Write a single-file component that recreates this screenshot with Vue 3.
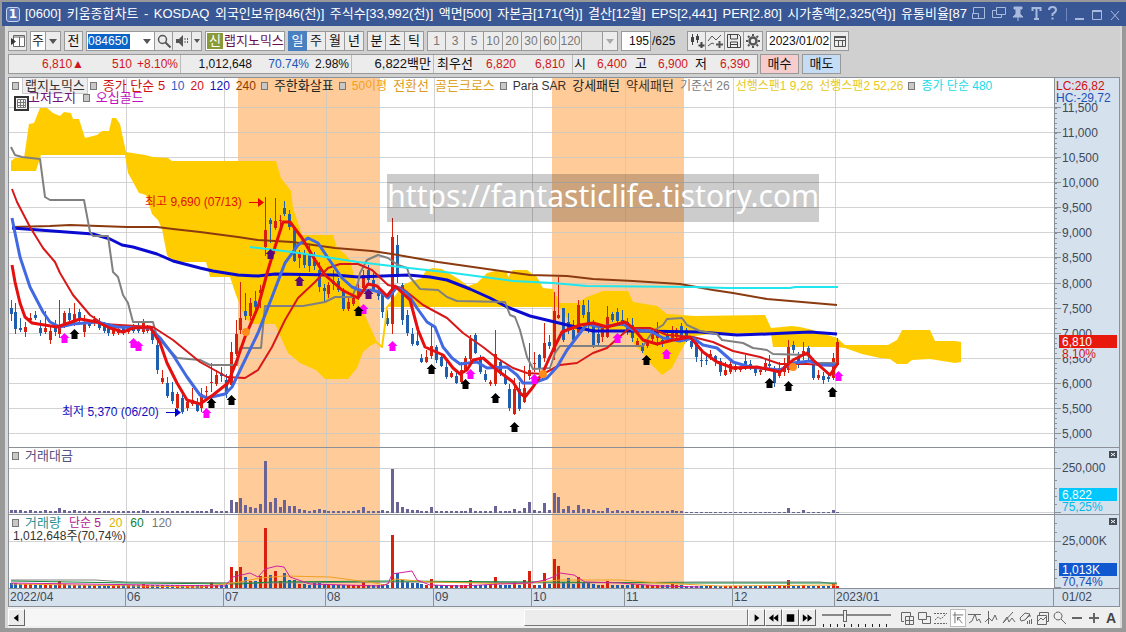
<script setup>
import { ref } from 'vue'

const title = ['[0600]', '키움종합차트', '-', 'KOSDAQ', '외국인보유[846(천)]', '주식수[33,992(천)]', '액면[500]', '자본금[171(억)]', '결산[12월]', 'EPS[2,441]', 'PER[2.80]', '시가총액[2,325(억)]', '유통비율[87']
const code = ref('084650')
const count = ref('195')
const date = ref('2023/01/02')
const zoom = ref(33)
const units = ['일', '주', '월', '년']
const intraday = ['분', '초', '틱']
const minutes = [1, 3, 5, 10, 20, 30, 60, 120]

const quote = [
  ['6,810▲', 'up'], ['510', 'up'], ['+8.10%', 'up sep'], ['1,012,648', ''], ['70.74%', 'down'], ['2.98%', 'sep'],
  ['6,822백만', 'sep ko'], ['최우선', 'ko'], ['6,820', 'up'], ['6,810', 'up sep wide'],
  ['시', 'ko'], ['6,400', 'up'], ['고', 'ko'], ['6,900', 'up'], ['저', 'ko'], ['6,390', 'up wide'],
]

const legend = [
  { t: '랩지노믹스', c: '#333', m: 1, box: 1 },
  { t: '종가 단순 5', c: '#d01010', m: 1 }, { t: '10', c: '#2a62c8', s: 1 }, { t: '20', c: '#d01010', s: 1 }, { t: '120', c: '#1010c0', s: 1 }, { t: '240', c: '#8b3a00', s: 1 },
  { t: '주한화살표', c: '#222', m: 1 },
  { t: '50이평', c: '#f0a020', m: 1, s: 1 }, { t: '전환선', c: '#e09a20' }, { t: '골든크로스', c: '#e0a020' },
  { t: 'Para SAR', c: '#333', m: 1, s: 1 }, { t: '강세패턴', c: '#222' }, { t: '약세패턴', c: '#4a3020' }, { t: '기준선 26', c: '#808080', s: 1 },
  { t: '선행스팬1 9,26', c: '#e8c820', s: 1 }, { t: '선행스팬2 52,26', c: '#e8c820', s: 1 },
  { t: '종가 단순 480', c: '#20dce8', m: 1, s: 1 },
]
const volumeLegend = [
  { t: '거래량', c: '#2a9090', m: 1 }, { t: '단순 5', c: '#b01890', s: 1 }, { t: '20', c: '#e0b000', s: 1 }, { t: '60', c: '#108030', s: 1 }, { t: '120', c: '#777', s: 1 },
]

const priceTicks = Array.from({ length: 14 }, (_, i) => ({ y: Math.round(107 + i * 25.08) + 0.5, label: (11500 - i * 500).toLocaleString('en-US') }))
const minorTicks = Array.from({ length: 68 }, (_, i) => 103.5 + i * 5)
const months = [126.5, 224.5, 326.5, 434.5, 532.5, 625.5, 733.5, 835.5]
const monthLabels = ['2022/04', '06', '07', '08', '09', '10', '11', '12', '2023/01']
const bands = [[238, 142], [552, 132]]

// x, high, body top, body bottom, low, direction (1 = up)
const candles = `11 300 308 314 321 0,15 303 312 329 334 0,20 318 328 330 332 0,25 322 327 332 337 1,30 313 318 320 323 1,35 311 315 318 320 0,40 320 328 333 336 0,45 311 328 332 334 1,50 325 331 340 344 1,55 320 326 332 336 0,59 300 326 334 338 1,64 311 313 324 328 1,69 308 313 320 322 0,74 303 314 322 326 1,79 309 312 320 322 0,84 315 322 332 337 1,89 320 322 326 328 0,94 316 319 323 326 1,99 318 322 328 330 0,104 322 325 331 333 0,108 323 326 333 336 0,113 325 328 334 336 1,118 326 329 333 335 1,123 325 327 333 335 0,128 325 327 332 334 1,133 324 326 331 333 0,138 322 326 331 333 0,143 319 323 332 334 1,147 325 328 331 333 1,152 326 331 340 344 0,157 340 345 370 374 0,162 370 378 382 384 1,167 377 383 396 398 0,172 382 392 401 404 0,177 392 394 408 410 1,182 393 398 412 414 0,187 400 402 408 411 1,192 388 400 404 406 1,197 398 402 411 412 0,201 388 394 408 412 1,206 386 391 392 398 1,211 363 382 383 392 1,216 370 375 384 386 1,221 367 373 376 382 0,226 374 380 394 398 0,231 342 352 385 388 1,236 320 334 354 356 1,240 282 318 330 334 1,245 293 311 316 320 0,250 298 303 316 320 1,255 291 301 307 311 0,260 285 290 293 308 1,265 197 230 247 256 1,270 218 220 224 243 0,275 198 221 228 230 1,280 215 220 221 232 1,284 201 208 214 216 0,289 210 214 227 230 0,294 226 228 261 262 0,299 250 253 258 268 1,304 250 253 265 268 0,309 245 255 266 272 0,314 252 258 266 270 0,319 262 270 287 292 0,324 284 288 291 302 0,328 282 285 294 298 1,333 270 281 284 290 0,338 278 281 290 292 0,343 288 291 309 311 0,348 298 302 309 311 1,353 294 298 304 306 1,358 282 290 298 300 1,363 270 275 288 290 1,368 265 270 280 286 0,373 273 280 290 292 0,378 288 292 296 300 0,382 290 293 312 318 0,387 310 318 324 326 0,392 218 237 324 334 1,397 235 245 277 283 0,402 283 285 320 325 0,407 310 315 333 336 0,412 328 334 344 346 0,417 332 341 345 346 0,421 354 358 362 363 0,426 350 357 362 363 1,431 325 346 356 359 1,436 345 347 360 363 0,441 355 357 366 367 0,446 362 367 377 379 0,451 371 373 377 378 1,456 370 376 383 384 0,461 362 370 382 383 1,465 356 358 370 372 1,470 335 339 359 361 1,475 333 335 353 354 0,480 355 358 372 374 0,485 370 374 380 382 0,490 380 382 384 386 1,495 330 354 384 386 1,500 360 362 374 376 0,505 370 377 384 385 0,509 384 389 408 411 0,514 378 389 414 415 1,519 382 389 409 411 0,524 366 388 402 403 1,529 343 370 376 380 1,534 352 363 364 372 1,539 354 355 368 372 0,544 323 343 358 362 1,549 335 342 346 349 0,554 292 311 352 360 1,558 277 315 318 319 1,563 308 308 340 342 0,568 313 322 330 334 0,573 320 330 340 342 0,578 300 305 333 336 1,583 300 305 315 318 0,588 300 312 325 333 0,593 320 322 347 348 0,598 328 334 343 346 0,602 325 328 337 342 1,607 306 317 337 338 1,612 312 314 320 322 0,617 308 312 321 326 0,622 310 320 324 326 0,627 318 322 331 335 0,632 318 325 338 342 0,637 338 341 345 346 1,642 343 346 351 353 0,647 338 342 346 348 1,652 330 334 339 342 1,657 322 331 338 346 1,662 338 340 344 347 0,667 330 335 340 342 0,672 326 330 338 340 1,676 328 330 337 342 1,681 323 326 338 341 0,686 328 330 340 342 0,691 338 341 347 349 0,696 342 343 357 362 0,701 352 360 361 367 0,706 356 360 361 365 0,710 350 354 356 360 1,715 355 356 362 366 0,720 358 361 372 376 0,725 362 370 375 376 1,730 360 364 372 374 1,735 362 366 370 372 1,740 366 368 370 372 1,745 355 361 366 370 0,750 360 364 368 370 0,755 366 369 373 376 0,760 369 370 372 375 1,765 358 363 370 372 1,769 355 364 366 370 0,774 366 370 383 387 0,779 362 368 376 378 1,784 358 366 372 376 1,788 340 347 370 373 1,793 341 345 350 353 0,798 352 358 363 368 0,803 342 351 356 360 1,808 346 348 356 360 0,813 358 361 378 380 0,818 370 375 378 380 1,823 372 376 380 384 0,828 374 377 379 382 0,833 353 358 378 380 1,837 338 342 365 366 1`
  .split(',').map(r => { const [x, hi, top, bot, lo, up] = r.split(' ').map(Number); return { x, hi, top, bot, lo, up } })

const turnover = { 11: 3, 15: 3, 20: 3, 30: 3, 45: 3, 59: 5, 64: 3, 74: 3, 143: 3, 211: 4, 231: 13, 236: 11, 240: 15, 245: 8, 250: 6, 255: 5, 260: 9, 265: 52, 270: 11, 275: 15, 280: 6, 284: 13, 289: 7, 294: 7, 299: 4, 304: 3, 314: 3, 319: 4, 324: 3, 358: 3, 363: 6, 382: 3, 392: 44, 397: 11, 402: 6, 407: 4, 412: 3, 417: 3, 431: 6, 470: 5, 495: 7, 514: 4, 524: 5, 529: 11, 534: 3, 544: 10, 549: 3, 554: 20, 558: 16, 563: 4, 568: 7, 573: 3, 578: 8, 583: 4, 588: 4, 593: 3, 607: 5, 617: 3, 632: 3, 672: 3, 788: 5, 803: 3, 833: 3 }
const volume = { 11: 5, 15: 5, 20: 4, 25: 4, 30: 4, 59: 7, 64: 4, 143: 4, 211: 6, 231: 21, 236: 17, 240: 21, 245: 11, 250: 7, 255: 7, 260: 12, 265: 60, 270: 13, 275: 17, 280: 7, 284: 15, 289: 8, 294: 8, 299: 4, 304: 4, 314: 5, 319: 5, 324: 4, 363: 7, 382: 4, 392: 53, 397: 15, 402: 8, 407: 6, 412: 5, 417: 5, 421: 4, 431: 9, 470: 8, 495: 11, 514: 6, 524: 8, 529: 17, 544: 15, 534: 3, 549: 4, 554: 29, 558: 22, 563: 6, 568: 10, 573: 4, 578: 11, 583: 5, 588: 5, 593: 4, 607: 7, 632: 4, 672: 4, 788: 8, 803: 3, 833: 4 }
const barsOf = (map, base, low, late) => candles.map(c => {
  const h = map[c.x] ?? (c.x > 685 ? late : low)
  return { x: c.x - 1, y: base - h, h, up: c.up }
})
const turnoverBars = barsOf(turnover, 513, 2, 1)
const volumeBars = barsOf(volume, 588, 3, 2)

const clouds = [
  '11,161 15,158 24,158 29,124 34,123 40,108 47,108 53,113 60,116 64,112 71,113 73,119 79,119 85,138 97,135 102,131 109,131 112,118 116,118 120,124 126,152 145,155 153,157 168,158 172,161 276,161 281,178 291,191 293,208 302,235 333,235 337,248 345,254 350,260 353,272 357,290 360,305 368,322 372,331 377,342 370,346 363,352 357,368 348,379 325,379 316,370 300,363 288,353 282,340 275,324 252,324 245,318 236,295 230,277 210,277 206,262 172,262 167,255 162,229 158,220 152,214 146,195 139,193 133,182 128,173 125,155 41,155 36,171 11,171',
  '386,307 392,300 400,289 405,284 412,281 422,278 426,270 433,268 442,269 452,275 460,280 468,286 477,283 487,273 495,271 507,272 508,277 513,270 527,270 537,277 543,288 553,289 560,303 577,303 587,297 603,291 628,291 633,302 657,306 667,314 695,316 765,315 771,328 792,326 800,327 813,330 837,338 845,345 888,345 897,340 902,330 930,330 935,341 955,341 961,342 961,362 955,363 930,359 912,360 907,364 897,364 890,359 880,358 862,354 845,348 837,347 773,347 771,334 717,333 695,336 687,340 680,352 672,368 662,375 650,363 642,352 633,343 628,331 594,331 573,330 563,311 558,307',
]

const lines = [
  { c: '#ffcc00', w: 2, p: '375,341 382,347 385,325 387,307' },
  { c: '#8b3a10', w: 2, p: '12,227 50,226 70,225 127,227 157,227 173,229 200,232 238,237 258,240 292,242 335,248 372,251 392,254 438,262 480,268 530,275 567,276 593,279 633,281 680,284 713,290 733,293 767,299 837,305' },
  { c: '#0a0ad0', w: 3, p: '12,228 93,234 110,239 122,245 133,247 157,254 173,261 200,268 213,271 238,275 258,276 275,274 335,275 358,277 408,275 430,277 447,280 470,289 490,298 507,307 530,316 563,324 593,331 640,331 700,332 737,335 767,334 787,333 810,332 837,334' },
  { c: '#808080', w: 2, p: '11,147 15,155 22,157 40,159 45,197 50,200 84,200 90,232 93,236 108,236 113,272 118,277 123,295 128,303 133,322 153,322 157,337 177,358 200,360 210,365 237,365 240,348 261,348 265,306 303,306 325,302 335,297 352,297 358,283 360,273 367,260 378,255 388,258 398,265 407,268 410,277 420,289 438,290 447,297 457,301 505,302 510,315 515,317 520,330 527,357 533,369 550,368 555,353 560,346 643,346 653,331 663,325 667,319 682,318 687,325 700,331 717,334 722,340 743,343 753,348 767,350 773,354 807,355 817,363 837,363' },
  { c: '#d81818', w: 2, p: '12,189 17,202 30,227 43,248 55,262 60,273 73,295 90,315 103,324 153,327 173,340 200,362 227,377 245,378 258,370 272,347 285,320 298,298 315,282 328,268 340,264 358,264 372,270 388,285 402,288 423,305 447,318 463,333 483,347 497,358 513,368 527,373 543,374 560,365 577,363 593,353 607,348 618,338 630,328 650,328 667,335 693,337 713,342 733,351 760,357 780,364 807,364 837,366' },
  { c: '#4169e1', w: 3, p: '12,218 15,233 20,257 30,287 43,312 50,322 60,327 73,324 97,322 117,327 150,328 160,338 173,355 187,377 200,395 207,398 225,394 232,387 245,360 258,333 272,297 285,263 298,245 308,238 318,243 328,258 342,278 352,287 362,291 372,290 382,293 388,298 397,287 407,293 417,308 427,322 435,327 443,347 452,358 460,364 477,362 487,368 507,367 517,375 523,383 533,383 547,378 557,367 567,350 580,333 587,324 600,327 623,324 633,330 650,331 663,338 680,341 693,338 703,345 717,348 733,362 750,367 780,370 793,363 810,361 820,365 837,365' },
  { c: '#e60f0f', w: 3, p: '12,265 15,282 20,303 25,317 32,323 57,327 80,319 97,322 110,328 123,332 133,328 150,327 160,343 167,363 177,383 187,400 200,404 213,395 228,383 237,360 245,337 258,307 268,270 275,247 283,222 290,222 302,238 315,260 325,275 342,290 358,298 368,284 377,286 387,296 395,286 410,300 418,330 425,347 443,355 453,368 460,374 467,370 473,360 483,358 497,370 513,382 520,393 525,397 533,387 543,372 553,350 562,332 580,325 593,323 607,327 625,322 633,328 643,340 657,344 673,340 690,337 703,352 717,362 733,368 757,367 780,372 793,360 807,353 813,360 830,375 838,363' },
  { c: '#20e6ee', w: 2, p: '250,247 292,252 325,257 358,262 400,267 453,273 513,281 553,283 587,286 693,287 727,288 790,288 795,287 838,287' },
]
const volumeLines = [
  { c: '#808080', p: '11,580 95,580 126,582 260,583 400,582 560,583 700,582 820,582 837,584' },
  { c: '#108a38', p: '11,581 130,583 240,584 270,582 390,581 540,582 684,583 837,583' },
  { c: '#f0a020', p: '11,584 200,587 240,582 260,578 285,576 330,577 375,583 385,585 395,579 430,582 520,584 560,580 620,580 660,583 720,586 837,585' },
  { c: '#d020a0', p: '11,583 225,586 233,577 250,573 258,577 265,569 277,566 284,567 290,577 310,584 380,586 388,584 392,574 412,571 417,580 430,585 462,586 500,584 530,583 545,580 553,577 560,573 574,575 585,582 620,583 660,586 700,587' },
]
const signals = [
  { c: '#ff00ff', at: [[64, 338], [133, 343], [138, 346], [206, 413], [363, 309], [392, 346], [470, 374], [534, 379], [617, 338], [666, 354], [838, 376]] },
  { c: '#000', at: [[74, 334], [211, 403], [231, 400], [358, 311], [431, 369], [465, 384], [495, 398], [514, 427], [646, 360], [769, 383], [788, 386], [832, 392]] },
  { c: '#5a0a78', at: [[270, 254], [299, 281], [368, 294]] },
]
const golden = [[246, 332], [543, 374], [793, 367]]

const playback = [
  { n: '다음', d: 'M6 4l5 4-5 4z' },
  { n: '뒤로', d: 'M8 4v8L3 8zM13 4v8L8 8z' },
  { n: '정지', d: 'M4 4h8v8H4z' },
  { n: '앞으로', d: 'M3 4v8l5-4zM8 4v8l5-4z' },
]
const tools = [
  { n: '창 추가', d: 'M5 11.500H2.500v-9h9V6M6.500 6.500h8v8h-8zM10.500 7v8M7 10.500h8' },
  { n: '창 복사', d: 'M2.500 2.500h8v7h-8zM6.500 9.500v4h8v-7h-4' },
  { n: '지표', d: 'M1 3.500h13M1 13.500h13M2 10l3-3 3 2 5-5', dash: 1 },
  { n: '기준점', d: 'M2 4.500h12M4.500 1v13M7 7l6 7M7.500 11V7.500H11', on: 1 },
  { n: '고점', d: 'M1 4.500h13M2 13l3-2 3-7 2 7 2-2 2 4' },
  { n: '추세', d: 'M4.500 1v13M1 12l4-4 3 3 3-6 2 5' },
  { n: '각도', d: 'M2 13L12 2M2 13l4-6 2 5 3-4 3 4' },
  { n: '지우기', d: 'M2 8l5-5 5 1-5 6-4 1zM7 10l5-5v2M9.500 11v3M11.500 10v4M13.500 9v5' },
  { n: '차트 저장', d: 'M2.500 5.500h9v9h-9zM4.500 5V2.500h9v9H12M3 11l3-3 2 2 3-3' },
  { n: '돋보기', d: 'M6 2a4 4 0 1 0 .1 0M9 9l5 5' },
  { n: '축소', d: 'M3 8h10', bold: 1 },
  { n: '확대', d: 'M3 8h10M8 3v10', bold: 1 },
]
</script>

<template>
  <div class="window">
    <header class="titlebar">
      <span class="badge">1</span>
      <h1 class="caption"><span v-for="t in title" :key="t">{{ t }}</span></h1>
      <svg class="winicons" width="158" height="24" viewBox="0 0 158 24" fill="none" stroke="#a9badf">
        <path d="M5.500 12V5.500h11v11H10M4.500 11.500h6v5h-6z" />
        <path d="M28.500 5.500h9v7h-9zM28 8.500h-3.500v7h9V13" />
        <path d="M46 5h8v2h-2v5l3 3H45l3-3V7h-2zM50 15v4" fill="#a9badf" />
        <path d="M64 6h9M68.500 6v11M64.500 5v4M72.500 5v4M66 17h5" stroke-width="2" />
        <path d="M81 8q0-3 3.500-3T88 8q0 2-3.500 4v2M84.500 15.500v2" stroke-width="2" />
        <path d="M98.500 6v13" stroke="#6f88bd" />
        <path d="M107 17h9" stroke-width="2" />
        <path d="M124.500 8.500h9v9h-9zM124 9.500h10" />
        <path d="M143 9l8 9M151 9l-8 9" />
      </svg>
    </header>

    <main class="body">
      <section class="controls">
        <div class="row">
          <button class="btn sq" aria-label="목록"><svg width="16" height="16" viewBox="0 0 16 16"><path d="M3.500 2.500h11v11h-11z" fill="#fff" stroke="#666" /><path d="M4 4h10M9.500 4v10" stroke="#666" fill="none" /><path d="M1 5v7l5-3.500z" fill="#333" /></svg></button>
          <button class="btn combo" aria-label="종목 구분"><span>주</span><i class="caret"></i></button>
          <button class="btn sq">전</button>
          <div class="group">
            <div class="code"><input v-model="code" aria-label="종목코드" /><i class="caret"></i></div>
            <button class="btn sq" aria-label="검색"><svg width="16" height="16" viewBox="0 0 16 16" fill="none" stroke="#555"><circle cx="6.500" cy="6.500" r="4" stroke-width="1.500" /><path d="M9.500 9.500l5 5" stroke-width="2" /></svg></button>
            <button class="btn sq" aria-label="음성"><svg width="16" height="16" viewBox="0 0 16 16"><path d="M2 6h3l4-4v12L5 10H2z" fill="#555" /><path d="M11 5v6M13.500 5v6" stroke="#666" stroke-dasharray="2 1" /></svg></button>
            <button class="btn tiny" aria-label="음성 설정"><i class="caret"></i></button>
          </div>
          <div class="name"><b>신</b><span>랩지노믹스</span></div>
          <div class="group"><button v-for="(u, i) in units" :key="u" class="btn sq" :class="{ active: i === 0 }">{{ u }}</button></div>
          <div class="group"><button v-for="u in intraday" :key="u" class="btn sq">{{ u }}</button></div>
          <div class="group dim"><button v-for="m in minutes" :key="m" class="btn sq">{{ m }}</button><button class="btn combo" aria-label="분 선택"><span></span><i class="caret"></i></button></div>
          <label class="count"><input v-model="count" aria-label="봉 개수" /><span>/625</span></label>
          <div class="group">
            <button class="btn sq" aria-label="차트 종류"><svg width="16" height="16" viewBox="0 0 16 16" fill="none" stroke="#444"><path d="M3.500 1v11M8.500 1v9" /><path d="M2 4h3v5H2zM7 3h3v4H7z" fill="#444" stroke="none" /><path d="M12.500 9v6M9.500 12.500h6" stroke-width="2" /></svg></button>
            <button class="btn sq" aria-label="지표 추가"><svg width="16" height="16" viewBox="0 0 16 16" fill="none" stroke="#555"><path d="M1 8l4-5 4 4 5-5M1 13l4-3 2 1" /><path d="M12.500 8v7M9 11.500h7" stroke-width="2" /></svg></button>
            <button class="btn sq" aria-label="저장"><svg width="16" height="16" viewBox="0 0 16 16" fill="none" stroke="#444"><path d="M1.500 1.500h11l2 2v11h-13zM4.500 2v4h7V2M4.500 14V9h7v5M5 11.500h6" /></svg></button>
            <button class="btn sq" aria-label="설정"><svg width="16" height="16" viewBox="0 0 16 16" fill="none" stroke="#555"><circle cx="8" cy="8" r="3.500" stroke-width="2.500" /><path d="M8 1v2M8 13v2M1 8h2M13 8h2M3 3l1.500 1.500M11.500 11.500L13 13M13 3l-1.500 1.500M3 13l1.500-1.500" stroke-width="2" /></svg></button>
          </div>
          <div class="group date"><input v-model="date" aria-label="날짜" /><button class="btn sq" aria-label="달력"><svg width="16" height="16" viewBox="0 0 16 16" fill="none" stroke="#555"><path d="M2.500 4.500h11v9h-11zM2 7.500h12M6.500 7v6M10.500 7v6" /><path d="M2 4h12" stroke-width="2" /></svg></button></div>
        </div>
        <div class="row">
          <div class="quote"><span v-for="(q, i) in quote" :key="i" :class="q[1]">{{ q[0] }}</span></div>
          <button class="order buy">매수</button>
          <button class="order sell">매도</button>
        </div>
      </section>

      <section class="chart">
        <div class="pane price">
          <div class="plot">
            <svg viewBox="9 78 1045 369" preserveAspectRatio="none">
              <g shape-rendering="crispEdges">
                <rect v-for="b in bands" :key="b[0]" :x="b[0]" y="78" :width="b[1]" height="369" fill="#ffcc99" />
                <path v-for="t in priceTicks" :key="t.y" :d="`M9 ${t.y}H1054`" class="grid" />
                <path v-for="m in months" :key="m" :d="`M${m} 78V447`" class="grid" />
              </g>
              <polygon v-for="(c, i) in clouds" :key="i" :points="c" fill="#ffcc00" />
              <g shape-rendering="crispEdges">
                <g v-for="c in candles" :key="c.x" :fill="c.up ? '#d8200f' : '#1f5fae'">
                  <rect :x="c.x" :y="c.hi" width="1" :height="c.lo - c.hi" />
                  <rect :x="c.x - 1" :y="c.top" width="3" :height="c.bot - c.top" />
                </g>
              </g>
              <polyline v-for="l in lines" :key="l.p" :points="l.p" :stroke="l.c" :stroke-width="l.w" fill="none" stroke-linejoin="round" />
              <g v-for="s in signals" :key="s.c" :fill="s.c">
                <path v-for="p in s.at" :key="p[0]" :d="`M${p[0] + 0.5} ${p[1] - 5}l5 5h-2v5h-6v-5h-2z`" />
              </g>
              <circle v-for="g in golden" :key="g[0]" :cx="g[0]" :cy="g[1]" r="4" fill="#ff8c1a" />
              <path d="M249 202.500h10" stroke="#f00000" /><path d="M258 198l6 4.500-6 4.500z" fill="#f00000" />
              <path d="M166 412.500h9" stroke="#0000d0" /><path d="M175 408l6 4.500-6 4.500z" fill="#0000d0" />
              <text x="145" y="206" class="note" fill="#e01010">최고 9,690 (07/13)</text>
              <text x="62" y="416" class="note" fill="#1010c0">최저 5,370 (06/20)</text>
            </svg>
            <div class="legend"><span v-for="(l, i) in legend" :key="i" :class="{ mark: l.m, boxed: l.box, small: l.s }" :style="{ color: l.c }"><em>{{ l.t }}</em></span></div>
            <div class="legend second">
              <svg width="16" height="15" viewBox="0 0 16 15"><path d="M1 1h13v13H1z" fill="#f4f4f4" stroke="#333" stroke-width="2" /><path d="M3.500 3.500h8v8h-8zM3 6.500h9M3 9.500h9M6.500 3v9M9.500 3v9" fill="none" stroke="#777" /></svg>
              <span class="doji">고저도지</span><span class="mark gold"><em>오십골드</em></span>
            </div>
            <div class="watermark">https://fantasticlife.tistory.com</div>
          </div>
          <div class="axis">
            <svg viewBox="1055 78 64 369" preserveAspectRatio="none">
              <path v-for="t in priceTicks" :key="t.y" :d="`M1055 ${t.y}h6`" class="tick" />
              <path v-for="t in minorTicks" :key="t" :d="`M1055 ${t}h2`" class="tick" />
              <text v-for="t in priceTicks" :key="t.label" x="1062" :y="t.y + 4">{{ t.label }}</text>
              <path d="M1055 78h64v25h-64zM1061 349h56v9h-56z" fill="#d6e1ee" />
              <text x="1056" y="90" class="red">LC:26,82</text>
              <text x="1056" y="102" class="blue">HC:-29,72</text>
              <path d="M1059 335h58v13h-58z" fill="#e8180c" />
              <text x="1062" y="346" class="white">6,810</text>
              <text x="1062" y="358" class="red">8,10%</text>
            </svg>
          </div>
        </div>

        <div class="pane turnover">
          <div class="plot">
            <svg viewBox="9 448 1045 66" preserveAspectRatio="none" shape-rendering="crispEdges">
              <rect v-for="b in bands" :key="b[0]" :x="b[0]" y="448" :width="b[1]" height="66" fill="#ffcc99" />
              <path d="M9 468.500H1054M9 512.500H1054" class="grid" />
              <path v-for="m in months" :key="m" :d="`M${m} 448V514`" class="grid" />
              <rect v-for="b in turnoverBars" :key="b.x" :x="b.x" :y="b.y" width="3" :height="b.h" fill="#6a6496" />
            </svg>
            <div class="legend"><span class="mark money"><em>거래대금</em></span></div>
          </div>
          <div class="axis">
            <svg viewBox="1055 448 64 66" preserveAspectRatio="none">
              <path d="M1055 468.500h6M1055 512.500h6M1055 452.500h2M1055 480.500h2M1055 488.500h2M1055 496.500h2M1055 504.500h2" class="tick" />
              <text x="1062" y="472">250,000</text>
              <path d="M1059 488h58v13h-58z" fill="#00c8ff" />
              <text x="1062" y="499" class="white">6,822</text>
              <text x="1062" y="511" class="cyan">75,25%</text>
              <path d="M1109 451h8v7h-8z" fill="#444c58" /><path d="M1111 453l4 3M1115 453l-4 3" stroke="#fff" />
            </svg>
          </div>
        </div>

        <div class="pane volume">
          <div class="plot">
            <svg viewBox="9 515 1045 73" preserveAspectRatio="none">
              <g shape-rendering="crispEdges">
                <rect v-for="b in bands" :key="b[0]" :x="b[0]" y="515" :width="b[1]" height="73" fill="#ffcc99" />
                <path d="M9 541.500H1054" class="grid" />
                <path v-for="m in months" :key="m" :d="`M${m} 515V588`" class="grid" />
                <rect v-for="b in volumeBars" :key="b.x" :x="b.x" :y="b.y" width="3" :height="b.h" :fill="b.up ? '#d8200f' : '#1f5fae'" />
              </g>
              <polyline v-for="l in volumeLines" :key="l.c" :points="l.p" :stroke="l.c" fill="none" />
            </svg>
            <div class="legend"><span v-for="l in volumeLegend" :key="l.t" :class="{ mark: l.m, small: l.s }" :style="{ color: l.c }"><em>{{ l.t }}</em></span></div>
            <p class="shares">1,012,648주(70,74%)</p>
          </div>
          <div class="axis">
            <svg viewBox="1055 515 64 73" preserveAspectRatio="none">
              <path d="M1055 541.500h6M1055 587.500h6M1055 523.500h2M1055 532.500h2M1055 551.500h2M1055 560.500h2M1055 569.500h2M1055 578.500h2" class="tick" />
              <text x="1062" y="545">25,000K</text>
              <path d="M1059 563h58v13h-58z" fill="#1058d0" />
              <text x="1062" y="574" class="white">1,013K</text>
              <text x="1062" y="586" class="blue">70,74%</text>
              <path d="M1109 518h8v7h-8z" fill="#444c58" /><path d="M1111 520l4 3M1115 520l-4 3" stroke="#fff" />
            </svg>
          </div>
        </div>

        <div class="time">
          <div class="months"><span v-for="m in monthLabels" :key="m">{{ m }}</span></div>
          <div class="now">01/02</div>
        </div>
      </section>

      <footer class="bottom">
        <button class="raised" aria-label="왼쪽으로"><svg width="16" height="16" viewBox="0 0 16 16"><path d="M10 4v8L5 8z" /></svg></button>
        <div class="track"><div class="thumb"></div></div>
        <button v-for="p in playback" :key="p.n" class="raised" :aria-label="p.n"><svg width="16" height="16" viewBox="0 0 16 16"><path :d="p.d" /></svg></button>
        <div class="slider"><input v-model="zoom" type="range" min="0" max="100" aria-label="확대 비율" /></div>
        <div class="tools">
          <button v-for="t in tools" :key="t.n" :class="{ on: t.on }" :aria-label="t.n"><svg width="16" height="16" viewBox="0 0 16 16" fill="none" stroke="#666" :stroke-width="t.bold ? 2 : 1" :stroke-dasharray="t.dash ? '2 1' : 'none'"><path :d="t.d" /></svg></button>
          <button class="letter">A</button>
        </div>
      </footer>
    </main>
  </div>
</template>

<style>
body { margin: 0; }
</style>

<style scoped>
.window { min-height: 100vh; box-sizing: border-box; display: flex; flex-direction: column; padding-top: 2px; background: #999; font: 13px/18px 'Liberation Sans', 'Noto Sans CJK KR', sans-serif; color: #111; }
.window * { box-sizing: border-box; }
button, input { font: inherit; color: inherit; margin: 0; padding: 0; border-radius: 0; }
svg { display: block; }

.titlebar { height: 24px; margin-left: 2px; display: flex; align-items: center; background: #3a5795; color: #fff; }
.badge { width: 14px; height: 15px; margin: 0 5px 0 4px; border: 1px solid #c8d4f0; border-radius: 3px; background: #5674b4; font: bold 12px/13px 'DejaVu Sans', sans-serif; text-align: center; }
.caption { flex: 1; margin: 0; display: flex; justify-content: space-between; font-size: 13px; font-weight: normal; white-space: nowrap; overflow: hidden; }
.winicons { margin-left: 1px; flex: none; }

.body { flex: 1; display: flex; flex-direction: column; margin: 0 4px 4px 5px; padding: 0 2px 0 3px; background: #d9d9d9; }
.controls { padding: 5px 0 3px; display: flex; flex-direction: column; gap: 3px; background: #d0d0d0; }
.row { display: flex; height: 20px; gap: 3px; }
.group { display: flex; }
.btn { height: 20px; border: 1px solid #999; background: #ececec; display: flex; align-items: center; justify-content: center; white-space: nowrap; }
.group .btn + .btn { border-left: 0; }
.sq { width: 19px; }
.tiny { width: 10px; }
.combo { width: 31px; padding: 0; }
.combo span { flex: 1; align-self: stretch; background: #fff; border-right: 1px solid #999; }
.combo .caret { margin: 0 3px; }
.caret { width: 0; height: 0; flex: none; border: 4px solid transparent; border-top: 5px solid #555; border-bottom: 0; }
.tiny .caret { border-width: 4px 3px 0; }
.code { display: flex; align-items: center; width: 68px; padding: 0 3px 0 1px; border: 1px solid #999; border-right: 0; background: #fff; }
.code input { width: 42px; height: 15px; border: 0; background: #0a64c8; color: #fff; margin-right: auto; font-size: 12px; }
.name { display: flex; align-items: center; width: 80px; padding-left: 1px; border: 1px solid #999; background: #fff; color: #6a1050; white-space: nowrap; }
.name b { width: 16px; height: 16px; margin-right: 1px; line-height: 16px; text-align: center; background: #8a9a38; color: #fff; font-weight: normal; }
.btn.active { background: #4a80c0; color: #fff; border-color: #4a80c0; }
.dim .btn { color: #777; font-size: 12px; }
.dim .sq:nth-child(8) { width: 22px; }
.dim .combo { width: 36px; }
.dim .combo span { background: #e4e4e4; }
.dim .caret { border-top-color: #aaa; }
.count { display: flex; align-items: center; width: 63px; font-size: 12px; }
.count input { width: 30px; height: 20px; border: 1px solid #999; background: #fff; text-align: right; padding-right: 1px; margin-right: 1px; }
.date input { width: 64px; height: 20px; border: 1px solid #999; border-right: 0; background: #fff; padding-left: 2px; font-size: 12px; }
.quote { width: 750px; display: grid; grid-template-columns: 75fr 48fr 49fr 71fr 57fr 43fr 82fr 39fr 43fr 57fr 13fr 41fr 20fr 41fr 19fr 50fr; border: 1px solid #999; background: #ececec; text-align: right; white-space: nowrap; font-size: 12px; }
.quote .ko { font-size: 13px; }
.quote .up { color: #d01818; }
.quote .down { color: #1c54b8; }
.quote .sep { border-right: 1px solid #bbb; padding-right: 2px; }
.quote .wide { padding-right: 7px; }
.order { width: 39px; height: 20px; border: 1px solid #999; }
.buy { background: #f6cccc; margin-left: -1px; }
.sell { background: #c4dcf6; }

.chart { flex: 1; display: flex; flex-direction: column; border: solid #8c9098; border-width: 1px 1px 0; background: #fff; }
.pane { display: grid; grid-template-columns: 1fr 65px; border-bottom: 1px solid #8c9098; }
.price { flex: 369 1 0; }
.turnover { flex: 66 1 0; }
.volume { flex: 73 1 0; }
.plot, .axis { position: relative; min-width: 0; overflow: hidden; }
.axis { border-left: 1px solid #8c9098; background: #d6e1ee; }
.plot > svg, .axis > svg { position: absolute; inset: 0; width: 100%; height: 100%; }
.grid { stroke: #c8c8c8; stroke-opacity: .8; fill: none; }
.tick { stroke: #8c9098; fill: none; shape-rendering: crispEdges; }
.note { font-size: 12px; }
.axis text { font-size: 12px; fill: #404a56; }
.axis .red { fill: #d01010; }
.axis .blue { fill: #1c50b8; }
.axis .white { fill: #fff; }
.axis .cyan { fill: #00b8e8; }
.legend { position: relative; display: flex; align-items: baseline; gap: 6px; height: 17px; padding-left: 3px; font-size: 13px; line-height: 16px; white-space: nowrap; }
.legend em { font-style: normal; }
.legend .small { font-size: 12px; }
.mark { display: flex; align-items: baseline; gap: 6px; }
.mark + .mark, span + .mark { margin-left: -1px; }
.mark::before { content: ''; align-self: center; width: 5px; height: 6px; border: 1px solid #777; background: #c8c8c8; }
.boxed { gap: 4px; margin-right: -2px; }
.boxed em { padding: 0 2px; line-height: 15px; background: #eee; outline: 1px solid #ccc; }
.volume .legend { gap: 8px; }
.second { height: 12px; margin-top: -3px; align-items: center; gap: 8px; }
.second svg { margin: 10px -10px 0 2px; }
.doji { color: #701080; }
.gold { color: #c010c0; }
.money { color: #555080; }
.shares { position: relative; margin: -3px 0 0 4px; font-size: 12px; line-height: 14px; color: #333; }
.watermark { position: absolute; left: 36.2%; top: 26%; height: 48px; background: rgba(0, 0, 0, .2); color: #fff; font: 30px/44px 'Noto Sans', sans-serif; }
.time { display: grid; grid-template-columns: 1fr 65px; height: 18px; border-bottom: 1px solid #8c9098; background: #d6e1ee; color: #404a56; font-size: 12px; line-height: 17px; }
.months { display: grid; grid-template-columns: 117fr 98fr 102fr 108fr 98fr 93fr 108fr 102fr 219fr; }
.months span { padding-left: 1px; border-right: 1px solid #8c9098; }
.now { padding-left: 8px; }

.bottom { display: flex; align-items: center; height: 21px; background: #efefef; }
.raised { width: 17px; height: 17px; flex: none; border: 1px solid; border-color: #fff #666 #666 #fff; background: #ececec; display: flex; align-items: center; justify-content: center; }
.track { flex: 1; display: flex; justify-content: flex-end; height: 17px; background: #f6f6f6; }
.thumb { width: 31%; border: 1px solid; border-color: #fff #777 #777 #fff; background: #ececec; }
.slider { width: 69px; height: 18px; margin: 0 8px 0 6px; flex: none; background: repeating-linear-gradient(90deg, #222 0 1px, transparent 1px 7px) 1px 15px / 100% 3px no-repeat; }
.slider input { display: block; appearance: none; width: 100%; height: 14px; background: linear-gradient(#888, #888) 0 5px / 100% 2px no-repeat; }
.slider input::-webkit-slider-thumb { appearance: none; width: 4px; height: 12px; background: #eee; border: 1px solid #666; }
.tools { display: flex; gap: 1px; flex: none; margin-right: 1px; }
.tools button { width: 16px; height: 18px; border: 0; background: none; display: flex; align-items: center; justify-content: center; }
.tools .on { background: #fff; border: 1px solid #bbb; }
.tools .letter { font: bold 14px/18px 'Liberation Sans', sans-serif; color: #444; }
</style>
